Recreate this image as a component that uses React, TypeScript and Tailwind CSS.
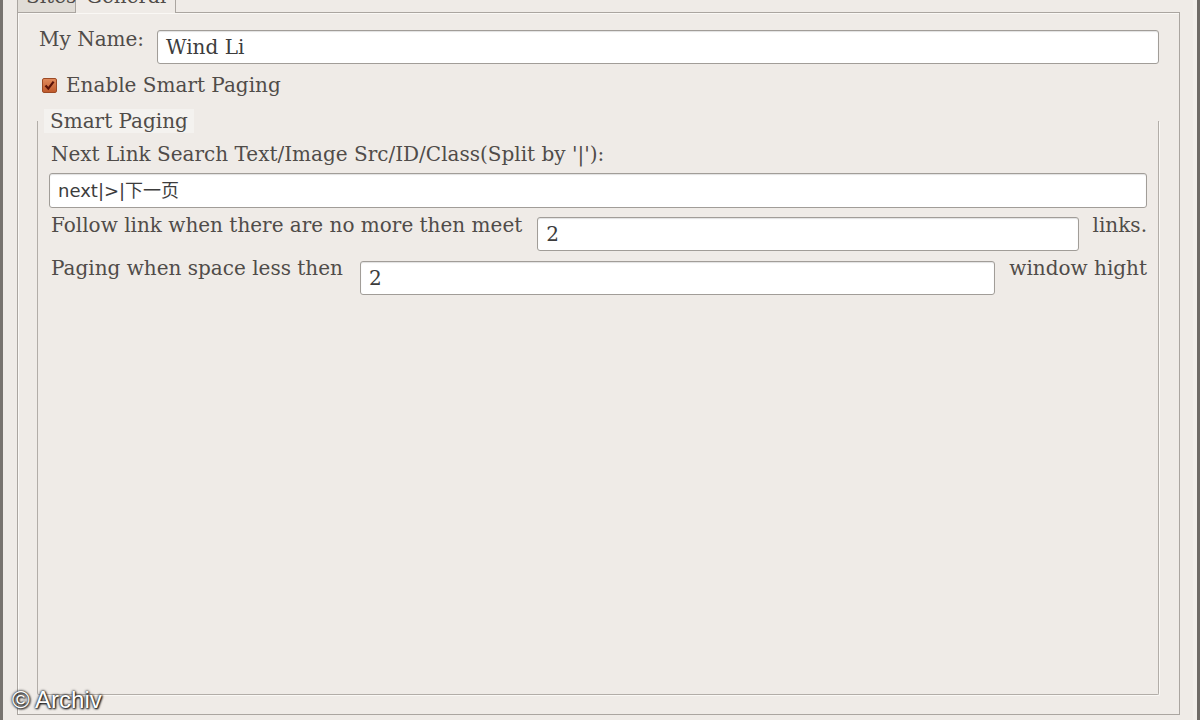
import React from "react";

const serif = { fontFamily: '"DejaVu Serif", serif' };

function TextField({ value, className = "", sans = false }: { value: string; className?: string; sans?: boolean }) {
  return (
    <div
      className={
        "h-[34px] bg-white border border-[#a19d98] rounded-[3px] shadow-[inset_0_1px_1px_rgba(0,0,0,0.12)] flex items-center px-[8px] text-[20px] text-[#3c3c3c] " +
        className
      }
      style={sans ? { fontFamily: '"DejaVu Sans", "Noto Sans CJK SC", sans-serif', fontSize: 18 } : serif}
    >
      {value}
    </div>
  );
}

export default function App() {
  return (
    <div
      className="relative w-[1200px] h-[720px] overflow-hidden bg-[#efebe7] flex text-[20px] text-[#504c49]"
      style={serif}
    >
      {/* window edges */}
      <div className="w-[3px] bg-[#77736f]" />
      <div className="flex-1 flex flex-col">
        {/* tabs, cut at the top */}
        <div className="h-[13px] overflow-hidden flex items-end pl-[14px] relative z-10">
          <div className="h-[36px] w-[59px] bg-[#e0dcd6] border border-[#aaa5a0] pl-[8px] pt-[7px] leading-[22px] text-[#4e4b48]">
            Sites
          </div>
          <div className="h-[36px] w-[100px] bg-[#efebe7] border border-[#aaa5a0] border-l-0 border-b-0 pl-[10px] pt-[7px] leading-[22px]">
            General
          </div>
        </div>
        <div className="flex-1 ml-[14px] mr-[13px] mb-[5px] -mt-px border border-[#aaa5a0] shadow-[inset_1px_1px_0_#faf8f5] flex flex-col px-[20px] pt-[17px] pb-[19px]">
          <div className="flex items-start">
            <span className="ml-[1px] w-[118px] leading-[22px] -mt-[2px]">My Name:</span>
            <TextField value="Wind Li" className="flex-1" />
          </div>

          <label className="flex items-center mt-[10px] ml-[4px] h-[22px]">
            <span className="w-[15px] h-[15px] rounded-[2px] border border-[#9c4a25] bg-gradient-to-b from-[#e08a5c] to-[#c05a2c] flex items-center justify-center">
              <svg width="11" height="11" viewBox="0 0 11 11">
                <path d="M1.5 5.5 L4.3 8.6 L9.6 1.6" fill="none" stroke="#5a1208" strokeWidth="2.2" />
              </svg>
            </span>
            <span className="ml-[9px]">Enable Smart Paging</span>
          </label>

          <fieldset className="flex-1 mt-[13px] -ml-[1px] border-x border-b border-t-0 border-[#b2ada8] shadow-[1px_1px_0_#faf8f5] rounded-b-[2px] px-[11px] pb-[10px] flex flex-col min-w-0">
            <legend className="-ml-[5px] px-[6px] bg-[#f4f2ef] leading-[24px] text-[#504c49]">Smart Paging</legend>
            <div className="ml-[2px] mt-[10px] leading-[22px]">Next Link Search Text/Image Src/ID/Class(Split by '|'):</div>
            <TextField value="next|>|下一页" sans className="mt-[8px] h-[35px]" />
            <div className="flex items-start mt-[9px]">
              <span className="ml-[2px] leading-[22px] mr-[15px] -mt-[3px]">Follow link when there are no more then meet</span>
              <TextField value="2" className="flex-1" />
              <span className="ml-[14px] leading-[22px] -mt-[3px]">links.</span>
            </div>
            <div className="flex items-start mt-[10px]">
              <span className="ml-[2px] leading-[22px] mr-[17px] -mt-[4px]">Paging when space less then</span>
              <TextField value="2" className="flex-1" />
              <span className="ml-[14px] leading-[22px] -mt-[4px]">window hight</span>
            </div>
          </fieldset>
        </div>
      </div>
      <div className="w-[4px] bg-[#f2efeb]" />
      <div className="w-[3px] bg-[#6f6b67]" />

      {/* watermark */}
      <div
        className="absolute left-[12px] top-[682px] text-[24px] text-white"
        style={{ fontFamily: '"Liberation Sans", Arial, sans-serif', textShadow: "0 0 3px #222, 0 0 2px #222, 1px 1px 2px #000" }}
      >
        © Archiv
      </div>
    </div>
  );
}
